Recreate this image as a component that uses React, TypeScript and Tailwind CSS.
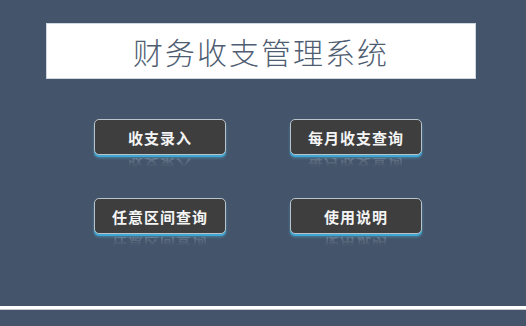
import React from 'react';

const cjk = { fontFamily: '"Noto Sans CJK SC", "Noto Sans CJK JP", sans-serif' };

const MenuButton: React.FC<{ label: string }> = ({ label }) => {
    return (
        <div className="flex flex-col items-center">
            <button
                className="w-[132px] h-[36px] rounded-[5px] bg-[#3e3e3e] border border-[#b9c3cc] shadow-[0_2px_0_#3fa7d1,0_3px_3px_rgba(79,179,217,0.5)] text-[15px] text-[#f4f4f4] font-bold tracking-[1px] leading-none"
                style={cjk}
            >
                {label}
            </button>
            {/* faint mirrored reflection under the button */}
            <span
                aria-hidden="true"
                className="mt-[3px] text-[15px] font-bold tracking-[1px] leading-none -scale-y-100 block bg-gradient-to-b from-transparent from-40% to-white/20 bg-clip-text text-transparent"
                style={cjk}
            >
                {label}
            </span>
        </div>
    );
};

const App: React.FC = () => {
    return (
        <div className="w-[526px] h-[326px] bg-[#44546a] overflow-hidden flex flex-col">
            <div className="mt-[23px] ml-[46px] w-[430px] h-[56px] bg-white border border-[#cfd6de] flex items-center justify-center">
                <h1 className="text-[30px] text-[#4f5d72] tracking-[2px] font-light leading-none" style={cjk}>
                    财务收支管理系统
                </h1>
            </div>
            <div className="mt-[40px] ml-[94px] grid grid-cols-[132px_132px] gap-x-[64px] gap-y-[25px]">
                <MenuButton label="收支录入" />
                <MenuButton label="每月收支查询" />
                <MenuButton label="任意区间查询" />
                <MenuButton label="使用说明" />
            </div>
            <div className="mt-auto mb-[16px] h-[4px] bg-white border-b border-[#c8ccd2]" />
        </div>
    );
};

export default App;
